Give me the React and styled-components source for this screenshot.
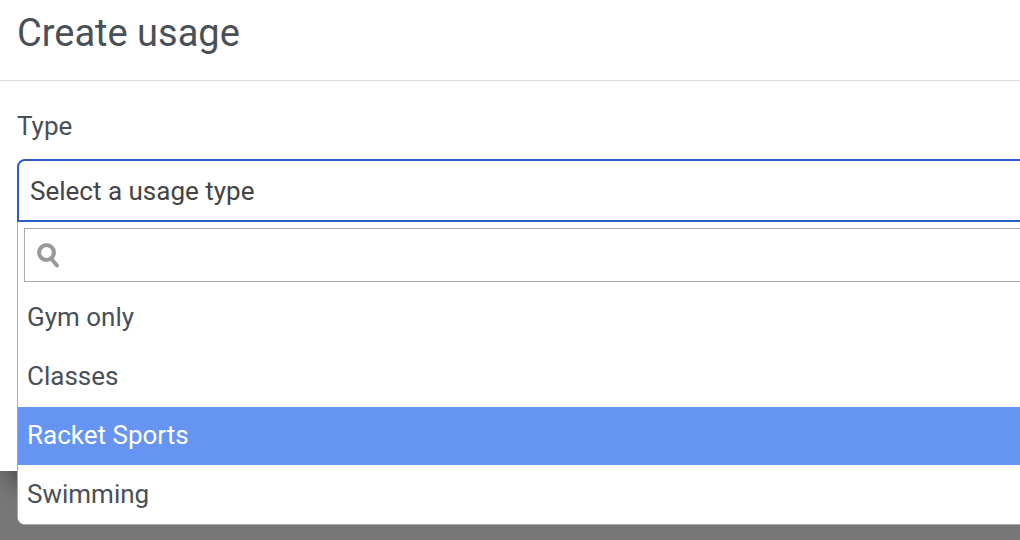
import { useState } from "react";
import styled, { createGlobalStyle } from "styled-components";

const usageTypes = ["Gym only", "Classes", "Racket Sports", "Swimming"];

const App = () => {
  const [open, setOpen] = useState(true);
  const [search, setSearch] = useState("");
  const [selected, setSelected] = useState("");
  const [active, setActive] = useState("Racket Sports");

  const results = usageTypes.filter((type) =>
    type.toLowerCase().includes(search.toLowerCase())
  );

  const pick = (type) => {
    setSelected(type);
    setOpen(false);
  };

  return (
    <>
      <GlobalStyle />
      <Modal role="dialog" aria-labelledby="modal-title">
        <Header>
          <Title id="modal-title">Create usage</Title>
        </Header>
        <Body>
          <Label htmlFor="usage-type">Type</Label>
          <SelectWrapper>
            <Selection
              id="usage-type"
              type="button"
              aria-haspopup="listbox"
              aria-expanded={open}
              $open={open}
              onClick={() => setOpen(!open)}
            >
              {selected || "Select a usage type"}
            </Selection>
            {open && (
              <Dropdown>
                <SearchBox>
                  <SearchIcon />
                  <SearchInput
                    type="text"
                    aria-label="Search usage types"
                    value={search}
                    onChange={(e) => setSearch(e.target.value)}
                  />
                </SearchBox>
                <Options role="listbox" aria-label="Type">
                  {results.map((type) => (
                    <Option
                      key={type}
                      role="option"
                      aria-selected={type === active}
                      $active={type === active}
                      onMouseEnter={() => setActive(type)}
                      onClick={() => pick(type)}
                    >
                      {type}
                    </Option>
                  ))}
                </Options>
              </Dropdown>
            )}
          </SelectWrapper>
        </Body>
      </Modal>
    </>
  );
};

const SearchIcon = () => (
  <Icon viewBox="0 0 24 26" aria-hidden="true">
    <circle cx="9.5" cy="10.5" r="7.4" />
    <path d="M14.5 17l5.5 6.5" />
  </Icon>
);

const GlobalStyle = createGlobalStyle`
  * {
    box-sizing: border-box;
  }

  body {
    min-height: 100vh;
    margin: 0;
    overflow: hidden;
    background-color: #777;
    color: #495057;
    font-family: Roboto, "Liberation Sans", sans-serif;
    font-size: 26px;
  }
`;

/* the dialog runs on past the right edge of the window */
const Modal = styled.section`
  margin-right: -40px;
  background-color: #fff;
  box-shadow: 12px 8px 24px rgba(0, 0, 0, 0.6);
`;

const Header = styled.header`
  padding: 10px 17px 24px;
  border-bottom: 1px solid #d5dce4;
`;

const Title = styled.h1`
  margin: 0;
  font-size: 38px;
  font-weight: 400;
  line-height: 46px;
`;

const Body = styled.div`
  padding: 29px 17px 249px;
`;

const Label = styled.label`
  display: block;
  margin-bottom: 17px;
  line-height: 32px;
`;

const SelectWrapper = styled.div`
  position: relative;
`;

const Selection = styled.button`
  display: block;
  width: 100%;
  padding: 15px 11px 13px;
  border: 2px solid #2860c8;
  border-radius: ${({ $open }) => ($open ? "8px 8px 0 0" : "8px")};
  background-color: #fff;
  color: #444;
  font: inherit;
  line-height: 31px;
  text-align: left;
`;

const Dropdown = styled.div`
  position: absolute;
  top: 100%;
  left: 0;
  width: 100%;
  border: 1px solid #aaa;
  border-top: none;
  border-radius: 0 0 8px 8px;
  background-color: #fff;
  overflow: hidden;
`;

const SearchBox = styled.div`
  display: flex;
  align-items: center;
  gap: 8px;
  margin: 6px 6px 7px;
  padding: 0 12px;
  border: 1px solid #aaa;
`;

const Icon = styled.svg`
  width: 24px;
  height: 26px;
  fill: none;
  stroke: #999;
  stroke-width: 4;
  stroke-linecap: round;
`;

const SearchInput = styled.input`
  flex: 1;
  height: 52px;
  border: none;
  outline: none;
  background: transparent;
  color: inherit;
  font: inherit;
`;

const Options = styled.ul`
  display: grid;
  gap: 1px;
  margin: 0;
  padding: 0;
  list-style: none;
`;

const Option = styled.li`
  padding: 12px 9px 14px;
  background-color: ${({ $active }) => ($active ? "#6694f3" : "#fff")};
  color: ${({ $active }) => ($active ? "#fff" : "inherit")};
  line-height: 32px;
  cursor: pointer;
`;

export default App;
